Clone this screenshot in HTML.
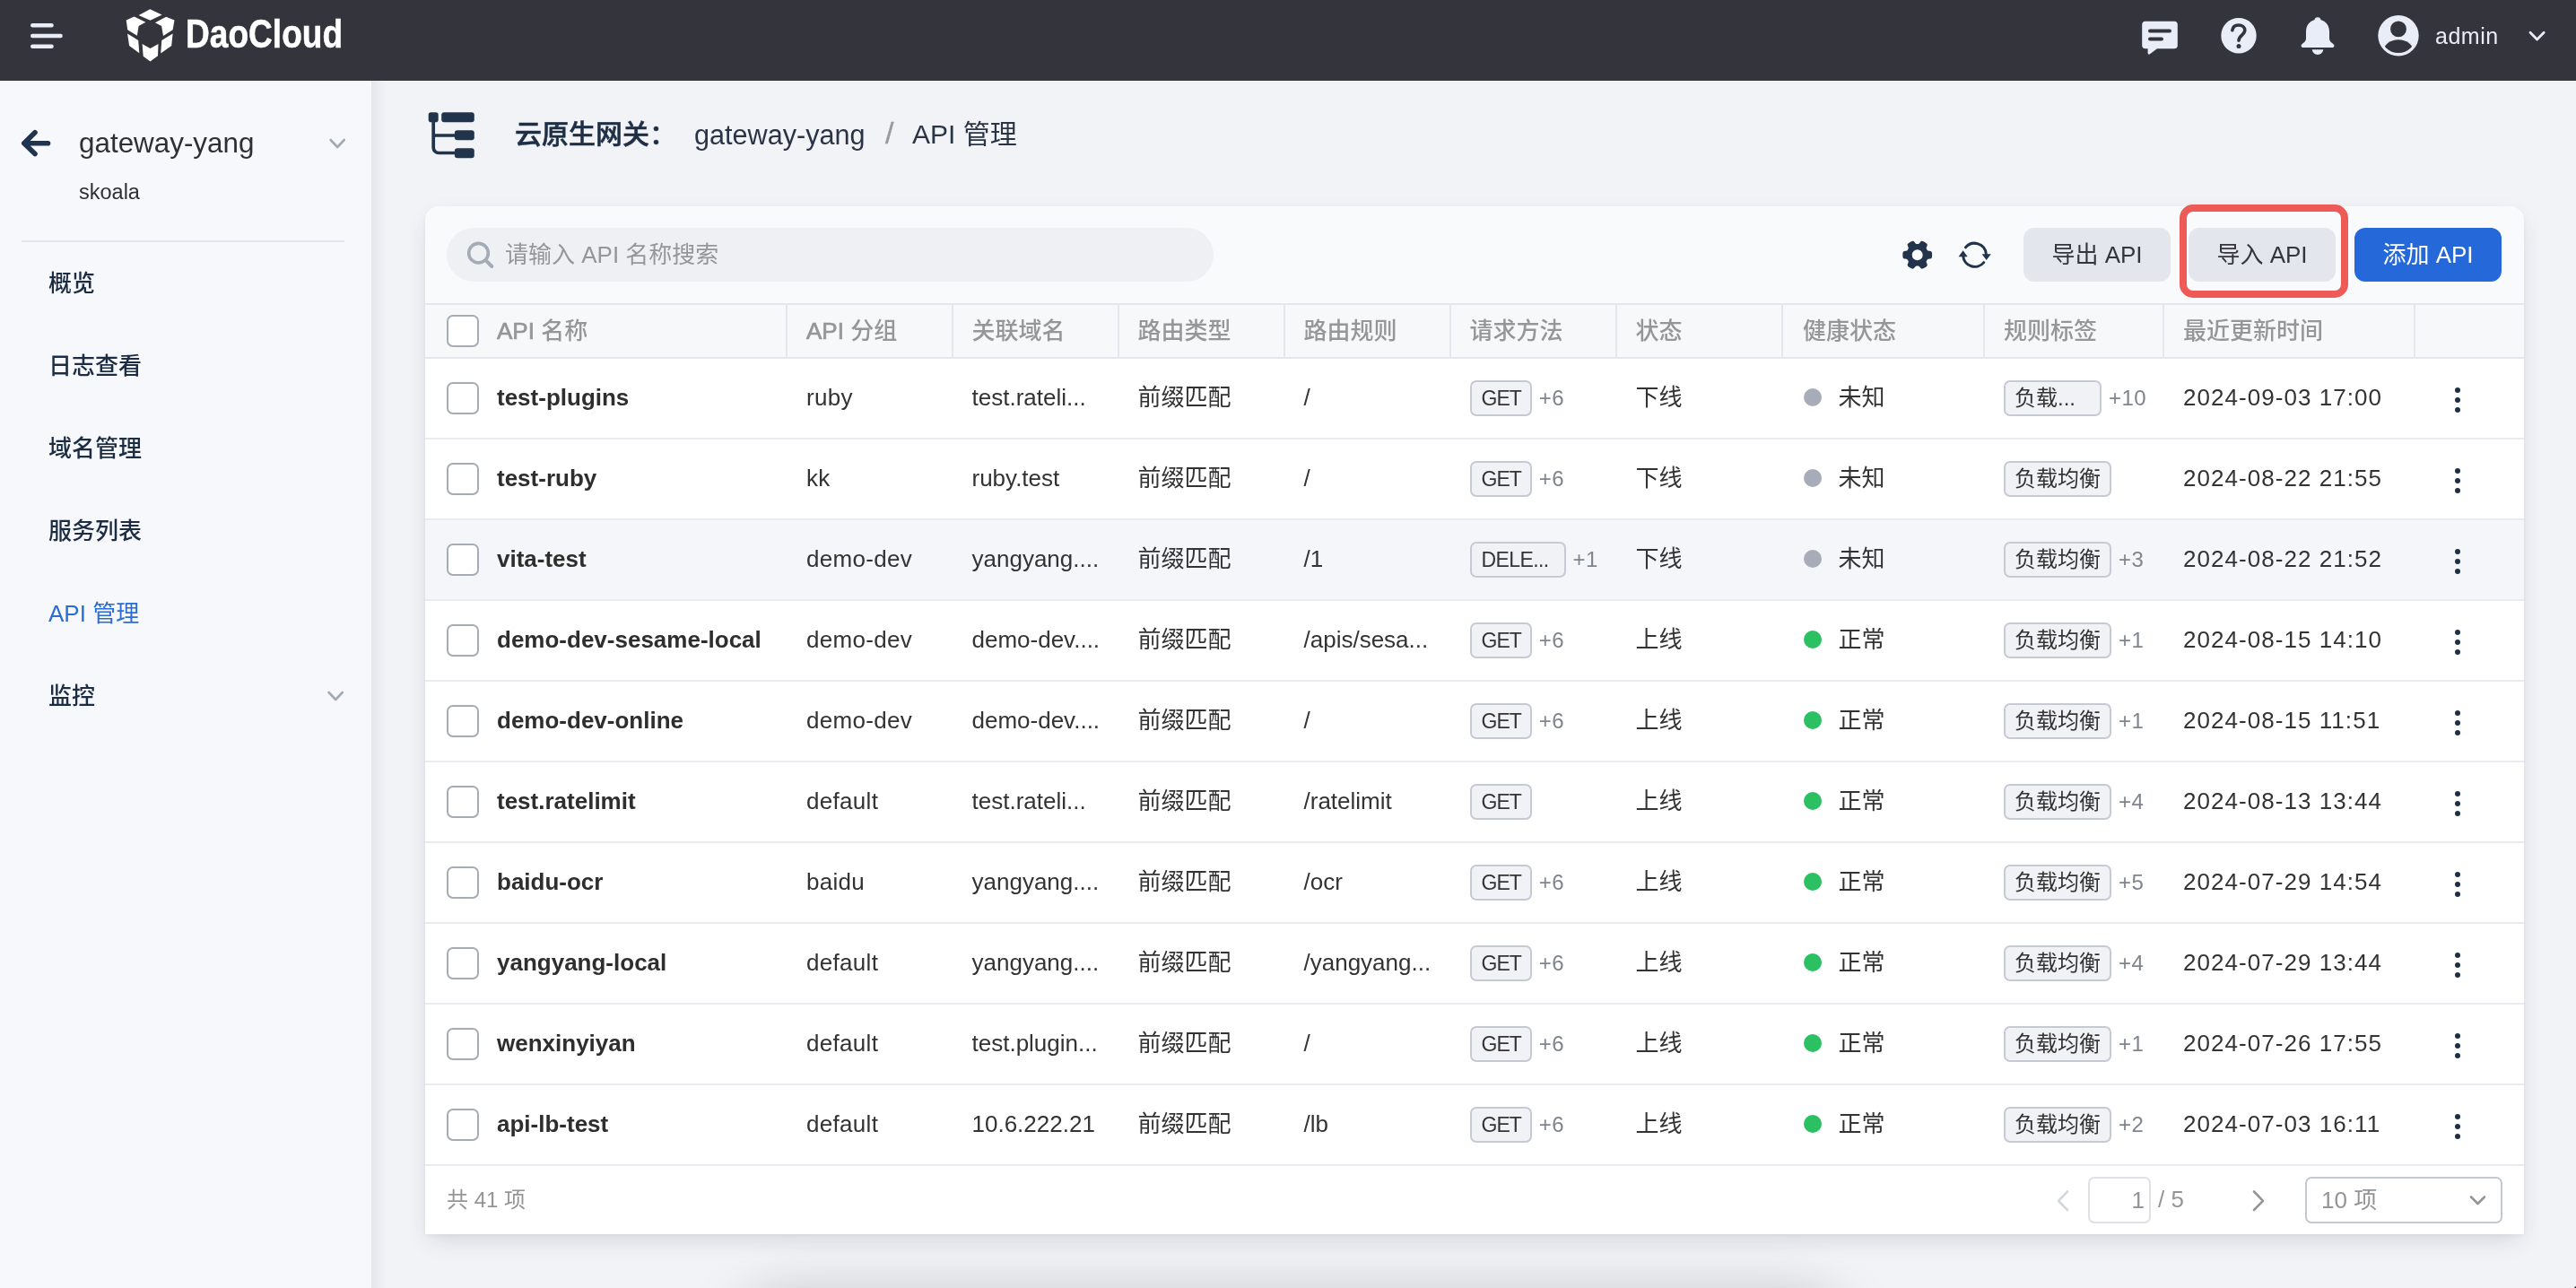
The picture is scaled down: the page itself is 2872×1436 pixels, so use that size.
<!DOCTYPE html>
<html lang="zh-CN">
<head>
<meta charset="utf-8">
<title>API 管理</title>
<style>
*{box-sizing:border-box;margin:0;padding:0}
html,body{width:2872px;height:1436px;overflow:hidden;background:#f2f3f7}
body{position:relative;font-family:"Liberation Sans","Noto Sans CJK SC",sans-serif;color:#2b2e33;font-size:26px}
i{font-style:normal}
.abs{position:absolute}
#app{position:absolute;left:0;top:0;width:2872px;height:1436px;will-change:transform;overflow:hidden}
/* header */
#hd{position:absolute;left:0;top:0;width:2872px;height:90px;background:#34353c}
#hd svg{position:absolute}
#brand{position:absolute;left:207px;top:7.5px;-webkit-text-stroke:.5px #fff;height:60px;line-height:60px;font-weight:bold;font-size:44px;color:#fff;transform-origin:0 50%;transform:scaleX(.843);letter-spacing:0;white-space:nowrap}
#admin{position:absolute;left:2715px;top:20px;height:40px;line-height:40px;font-size:25px;letter-spacing:.5px;color:#e9edf7;white-space:nowrap}
/* sidebar */
#sb{position:absolute;left:0;top:90px;width:414px;height:1346px;background:#f7f8fc}
#sbshadow{position:absolute;left:414px;top:90px;width:18px;height:1346px;background:linear-gradient(90deg,rgba(30,40,70,.06),rgba(30,40,70,0))}
#gw{position:absolute;left:88px;top:138px;height:44px;line-height:44px;font-size:31.4px;color:#2f3033;white-space:nowrap}
#sk{position:absolute;left:88px;top:196px;height:36px;line-height:36px;font-size:23.5px;color:#2f3033;white-space:nowrap}
#sbline{position:absolute;left:24px;top:268px;width:360px;height:2px;background:#e3e6ee}
.mi{position:absolute;left:54px;height:40px;line-height:40px;font-size:26px;font-weight:500;color:#1c2d43;white-space:nowrap}
.mi.act{color:#2b6dd2;font-weight:400}
/* main */
#ttl{position:absolute;left:574px;top:128px;height:44px;line-height:44px;font-size:30px;font-weight:500;-webkit-text-stroke:.55px #1e2f45;color:#1e2f45;white-space:nowrap}
#bc1{position:absolute;left:774px;top:128px;height:44px;line-height:44px;font-size:30.6px;color:#2a3445;white-space:nowrap}
#bcs{position:absolute;left:987px;top:126px;height:44px;line-height:44px;font-size:34px;-webkit-text-stroke:.4px #9a9a9a;color:#9a9a9a;white-space:nowrap}
#bc2{position:absolute;left:1017px;top:128px;height:44px;line-height:44px;font-size:30px;color:#2a3445;white-space:nowrap}
#card{position:absolute;left:474px;top:230px;width:2340px;height:1146px;background:#fff;border-radius:16px 16px 0 0;box-shadow:0 10px 26px -4px rgba(40,50,80,.14),0 2px 6px rgba(40,50,80,.05)}
#tb{position:absolute;left:0;top:0;width:2340px;height:108px;background:#f9fafc;border-radius:16px 16px 0 0}
#search{position:absolute;left:24px;top:24px;width:855px;height:60px;border-radius:30px;background:#eff0f4}
#search span{position:absolute;left:65px;top:0;height:60px;line-height:60px;font-size:26px;color:#959699;white-space:nowrap}
.btn{position:absolute;top:24px;width:164px;height:60px;line-height:60px;border-radius:12px;background:#e4e6ee;color:#33363b;text-align:center;font-size:26px;white-space:nowrap}
.btn.pri{background:#2468da;color:#fff}
#redbox{position:absolute;left:1956px;top:-2px;width:188px;height:104px;border:8px solid #ee5b57;border-radius:15px}
/* table */
#th{position:absolute;left:0;top:108px;width:2340px;height:62px;background:#f7f8fa;border-top:2px solid #e4e7ee;border-bottom:2px solid #e4e7ee;display:flex}
#th .td{height:58px;line-height:58px;color:#959698;font-weight:500;border-right:2px solid #e4e7ee}
#th .td.c10{border-right:0}
#th b{font-weight:normal;-webkit-text-stroke:.7px #959698}
#tbody{position:absolute;left:0;top:170px;width:2340px}
.tr{display:flex;height:90px;border-bottom:2px solid #e9ebf1;background:#fff}
.tr.hov{background:#f5f6f9}
.td{position:relative;height:88px;line-height:86px;padding-left:21px;white-space:nowrap;overflow:hidden;flex:none;font-size:26px;color:#333;letter-spacing:.3px}
.cj,.nm,#th .td{letter-spacing:0}
.c0{width:404px;padding-left:80px}
.c1{width:184.5px}.c2{width:185px;letter-spacing:0}.c3{width:185px}.c4{width:185px;letter-spacing:0}.c5{width:185px}.c6{width:185.5px}.c7{width:225px;padding-left:22px}.c8{width:200px}.c9{width:280px;letter-spacing:1.05px}.c10{width:120px}
.cb{position:absolute;left:24px;top:50%;margin-top:-18px;width:36px;height:36px;border:2px solid #a6acb6;border-radius:7px;background:#fff}
.nm{font-weight:bold;color:#2e2e2e}
.tag{display:inline-block;vertical-align:middle;height:40px;line-height:36px;padding:0 10px 0 11px;border:2px solid #c6cad4;border-radius:7px;background:#f1f2f6;font-size:23px;letter-spacing:-1px;color:#333;position:relative;top:-1px}
.tag.tcj{font-size:24px;letter-spacing:0;padding:0 10px}
.tag.tnar{width:109px}
.tag.tdel{letter-spacing:-.6px;width:107px}
.more{color:#7f858e;margin-left:8px;font-size:24px;letter-spacing:.4px}
.dot{display:inline-block;width:20px;height:20px;border-radius:50%;vertical-align:middle;margin-right:18.5px;position:relative;top:-2px;margin-left:1px}
.dot.un{background:#a6adb9}
.dot.ok{background:#2bc163}
.kb{position:absolute;left:44px;top:32px;width:6px;height:6px;border-radius:50%;background:#1e2f45;box-shadow:0 11px 0 #1e2f45,0 22px 0 #1e2f45}
/* footer */
#ft{position:absolute;left:0;top:1070px;width:2340px;height:76px}
#total{position:absolute;left:24px;top:0;height:76px;line-height:76px;font-size:24px;color:#949597}
#pgin{position:absolute;left:1854px;top:12px;width:70px;height:52px;border:2px solid #dfe1e7;border-radius:7px;text-align:right;padding-right:5px;line-height:48px;font-size:26px;color:#949597}
#pgof{position:absolute;left:1932px;top:12px;height:51px;line-height:51px;font-size:26px;color:#949597}
#pgsel{position:absolute;left:2096px;top:12px;width:220px;height:52px;border:2px solid #c5c9d4;border-radius:7px;padding-left:16px;line-height:48px;font-size:26px;color:#949597}
#botshadow{position:absolute;left:850px;top:1472px;width:1180px;height:60px;border-radius:30px;background:#000;box-shadow:0 0 60px 34px rgba(0,0,0,.17)}
</style>
</head>
<body>
<div id="app">
<div id="hd">
  <svg style="left:30px;top:24px" width="44" height="32" viewBox="0 0 44 32"><g stroke="#e9edf7" stroke-width="4.4" stroke-linecap="round"><path d="M6.2 4.2H27.6M6.2 16H37.6M6.2 27.8H27.6"/></g></svg>
  <svg style="left:138px;top:8px" width="60" height="64" viewBox="0 0 60 64" fill="#fff"><path d="M29.3 2.3L42.6 8.5L29.5 14.8L16.6 8.9Z"/><path d="M2.7 14.4L11.6 10.5L24.4 16.8L16.6 21.1L14.9 31.7L4.2 25.2Z"/><path d="M47.2 10.7L56.5 14.5L54.6 25.2L44 32L42.1 21.1L34.9 17.2Z"/><path d="M4.1 29.5L16.2 37.1L17.3 51.2L6.1 43.1Z"/><path d="M54.6 29.5L53.2 43.1L41.2 51.6L42.3 37.1Z"/><path d="M20.6 40.9L29.5 46L38.5 40.9L38 54.2L29.5 60.5L21.7 54.7Z"/></svg>
  <div id="brand">DaoCloud</div>
  <!-- chat -->
  <svg style="left:2384px;top:20px" width="48" height="44" viewBox="0 0 48 44"><path fill="#e9edf7" d="M8 3.7H40A3.8 3.8 0 0 1 43.8 7.5V30.5A3.8 3.8 0 0 1 40 34.3H21L12.6 40.4A1.3 1.3 0 0 1 10.6 39.3V34.3H8A3.8 3.8 0 0 1 4.2 30.5V7.500A3.8 3.8 0 0 1 8 3.7Z"/><path stroke="#34353c" stroke-width="4" stroke-linecap="round" d="M13 14.600H35M13 23.400H26"/></svg>
  <!-- help -->
  <svg style="left:2474px;top:18px" width="44" height="44" viewBox="0 0 44 44"><circle cx="22" cy="21.700" r="19.700" fill="#e9edf7"/><path fill="none" stroke="#34353c" stroke-width="3.600" stroke-linecap="round" stroke-linejoin="round" d="M14.800 15.800C15.400 11.800 18.300 10 21.800 10C25.800 10 28.800 12.400 28.800 15.800C28.800 20.800 22 21.500 22 27.200"/><circle cx="22" cy="33.400" r="2.500" fill="#34353c"/></svg>
  <!-- bell -->
  <svg style="left:2562px;top:16px" width="44" height="48" viewBox="0 0 44 48"><path fill="#e9edf7" d="M22 3.200C24 3.200 25.300 4.500 25.600 6.200C31.600 7.800 35 12.800 35 19.500V26.500C35 29 36 30.500 38.400 32.300C40.400 33.800 40.700 35 40.300 35.800C39.900 36.700 39 37 37.800 37H6.200C5 37 4.100 36.700 3.700 35.800C3.300 35 3.600 33.800 5.600 32.300C8 30.500 9 29 9 26.500V19.500C9 12.800 12.400 7.800 18.400 6.200C18.700 4.500 20 3.200 22 3.200Z"/><path fill="#e9edf7" d="M15.800 39.300H28.200C27.800 42.600 25.300 44.900 22 44.900C18.700 44.900 16.200 42.600 15.800 39.300Z"/></svg>
  <!-- avatar -->
  <svg style="left:2650px;top:16px" width="48" height="48" viewBox="0 0 48 48"><defs><clipPath id="avc"><circle cx="24" cy="23.800" r="19.300"/></clipPath></defs><circle cx="24" cy="23.800" r="22.700" fill="#e9edf7"/><circle cx="24" cy="16.400" r="8.900" fill="#34353c"/><ellipse cx="24" cy="40.500" rx="16.300" ry="12.300" fill="#34353c" clip-path="url(#avc)"/></svg>
  <div id="admin">admin</div>
  <svg style="left:2816px;top:32px" width="26" height="18" viewBox="0 0 26 18"><path fill="none" stroke="#e9edf7" stroke-width="2.800" stroke-linecap="round" stroke-linejoin="round" d="M5 4.300L12.600 12L20.200 4.300"/></svg>
</div>

<div id="sb"></div>
<div id="sbshadow"></div>
<svg class="abs" style="left:20px;top:140px" width="40" height="40" viewBox="0 0 40 40"><path fill="none" stroke="#1f344e" stroke-width="5.600" stroke-linecap="round" stroke-linejoin="round" d="M33.500 19.800H7.500M19 7.800L6.800 19.800L19 31.600"/></svg>
<div id="gw">gateway-yang</div>
<svg class="abs" style="left:364px;top:150px" width="24" height="20" viewBox="0 0 24 20"><path fill="none" stroke="#a3aab4" stroke-width="2.600" stroke-linecap="round" stroke-linejoin="round" d="M4.600 6L12.200 14L19.800 6"/></svg>
<div id="sk">skoala</div>
<div id="sbline"></div>
<div class="mi" style="top:296px">概览</div>
<div class="mi" style="top:388px">日志查看</div>
<div class="mi" style="top:480px">域名管理</div>
<div class="mi" style="top:572px">服务列表</div>
<div class="mi act" style="top:664px">API 管理</div>
<div class="mi" style="top:756px">监控</div>
<svg class="abs" style="left:362px;top:766px" width="24" height="20" viewBox="0 0 24 20"><path fill="none" stroke="#a3aab4" stroke-width="2.600" stroke-linecap="round" stroke-linejoin="round" d="M4.600 6L12.200 14L19.800 6"/></svg>

<!-- title -->
<svg class="abs" style="left:474px;top:120px" width="60" height="60" viewBox="0 0 60 60"><g fill="#21344b"><rect x="3.700" y="5.200" width="11" height="11" rx="2.800"/><rect x="18.200" y="5.200" width="36.600" height="11" rx="3"/><rect x="32.900" y="25.200" width="21.900" height="11" rx="3"/><rect x="32.900" y="45.300" width="21.900" height="11" rx="3"/></g><path fill="none" stroke="#21344b" stroke-width="3.700" d="M9.200 14V44.500A6 6 0 0 0 15.200 50.500H34M9.200 31H34"/></svg>
<div id="ttl">云原生网关：</div>
<div id="bc1">gateway-yang</div>
<div id="bcs">/</div>
<div id="bc2">API 管理</div>

<div id="card">
  <div id="tb">
    <div id="search">
      <svg style="position:absolute;left:20px;top:13px" width="36" height="36" viewBox="0 0 36 36"><circle cx="15.500" cy="15.200" r="10.800" fill="none" stroke="#a3abb7" stroke-width="3.600"/><path stroke="#a3abb7" stroke-width="4" stroke-linecap="round" d="M23.500 23.200L30.300 30"/></svg>
      <span>请输入 API 名称搜索</span>
    </div>
    <svg class="abs" style="left:1644px;top:36px" width="40" height="40" viewBox="0 0 40 40"><path fill="#21344b" fill-rule="evenodd" d="M36.10 18.20L36.09 18.63L36.08 19.06L36.05 19.49L36.00 19.91L35.94 20.34L35.86 20.76L35.75 21.17L35.58 21.57L35.29 21.94L34.82 22.25L34.10 22.47L33.20 22.59L32.36 22.68L31.72 22.82L31.30 23.00L31.01 23.23L30.78 23.49L30.60 23.75L30.43 24.02L30.27 24.30L30.11 24.58L29.96 24.86L29.82 25.16L29.71 25.47L29.66 25.84L29.71 26.31L29.91 26.92L30.25 27.70L30.59 28.54L30.77 29.27L30.74 29.83L30.56 30.26L30.30 30.61L30.00 30.92L29.67 31.20L29.33 31.46L28.99 31.71L28.63 31.95L28.27 32.18L27.90 32.40L27.53 32.61L27.14 32.81L26.76 33.00L26.37 33.17L25.97 33.34L25.56 33.48L25.15 33.58L24.72 33.64L24.25 33.58L23.75 33.32L23.21 32.80L22.65 32.09L22.15 31.40L21.71 30.92L21.34 30.65L20.99 30.51L20.66 30.44L20.34 30.41L20.02 30.40L19.70 30.40L19.38 30.40L19.06 30.41L18.74 30.44L18.41 30.51L18.06 30.65L17.69 30.92L17.25 31.40L16.75 32.09L16.19 32.80L15.65 33.32L15.15 33.58L14.68 33.64L14.25 33.58L13.84 33.48L13.43 33.34L13.03 33.17L12.64 33.00L12.26 32.81L11.87 32.61L11.50 32.40L11.13 32.18L10.77 31.95L10.41 31.71L10.07 31.46L9.73 31.20L9.40 30.92L9.10 30.61L8.84 30.26L8.66 29.83L8.63 29.27L8.81 28.54L9.15 27.70L9.49 26.92L9.69 26.31L9.74 25.84L9.69 25.47L9.58 25.16L9.44 24.86L9.29 24.58L9.13 24.30L8.97 24.02L8.80 23.75L8.62 23.49L8.39 23.23L8.10 23.00L7.68 22.82L7.04 22.68L6.20 22.59L5.30 22.47L4.58 22.25L4.11 21.94L3.82 21.57L3.65 21.17L3.54 20.76L3.46 20.34L3.40 19.91L3.35 19.49L3.32 19.06L3.31 18.63L3.30 18.20L3.31 17.77L3.32 17.34L3.35 16.91L3.40 16.49L3.46 16.06L3.54 15.64L3.65 15.23L3.82 14.83L4.11 14.46L4.58 14.15L5.30 13.93L6.20 13.81L7.04 13.72L7.68 13.58L8.10 13.40L8.39 13.17L8.62 12.91L8.80 12.65L8.97 12.38L9.13 12.10L9.29 11.82L9.44 11.54L9.58 11.24L9.69 10.93L9.74 10.56L9.69 10.09L9.49 9.48L9.15 8.70L8.81 7.86L8.63 7.13L8.66 6.57L8.84 6.14L9.10 5.79L9.40 5.48L9.73 5.20L10.07 4.94L10.41 4.69L10.77 4.45L11.13 4.22L11.50 4.00L11.87 3.79L12.26 3.59L12.64 3.40L13.03 3.23L13.43 3.06L13.84 2.92L14.25 2.82L14.68 2.76L15.15 2.82L15.65 3.08L16.19 3.60L16.75 4.31L17.25 5.00L17.69 5.48L18.06 5.75L18.41 5.89L18.74 5.96L19.06 5.99L19.38 6.00L19.70 6.00L20.02 6.00L20.34 5.99L20.66 5.96L20.99 5.89L21.34 5.75L21.71 5.48L22.15 5.00L22.65 4.31L23.21 3.60L23.75 3.08L24.25 2.82L24.72 2.76L25.15 2.82L25.56 2.92L25.97 3.06L26.37 3.23L26.76 3.40L27.14 3.59L27.53 3.79L27.90 4.00L28.27 4.22L28.63 4.45L28.99 4.69L29.33 4.94L29.67 5.20L30.00 5.48L30.30 5.79L30.56 6.14L30.74 6.57L30.77 7.13L30.59 7.86L30.25 8.70L29.91 9.48L29.71 10.09L29.66 10.56L29.71 10.93L29.82 11.24L29.96 11.54L30.11 11.82L30.27 12.10L30.43 12.38L30.60 12.65L30.78 12.91L31.01 13.17L31.30 13.40L31.72 13.58L32.36 13.72L33.20 13.81L34.10 13.93L34.82 14.15L35.29 14.46L35.58 14.83L35.75 15.23L35.86 15.64L35.94 16.06L36.00 16.49L36.05 16.91L36.08 17.34L36.09 17.77ZM13.70 18.20a6.00 6.00 0 1 0 12.00 0a6.00 6.00 0 1 0 -12.00 0Z"/></svg>
    <svg class="abs" style="left:1706px;top:34px" width="44" height="40" viewBox="0 0 44 40"><g fill="none" stroke="#21344b" stroke-width="3" stroke-linecap="round"><path d="M11.500 11.800A13 13 0 0 1 34.300 19"/><path d="M31.700 28.600A13 13 0 0 1 8.700 21.500"/></g><path fill="#21344b" d="M29.600 19.200H39.800L34.700 26Z"/><path fill="#21344b" d="M3.600 22.300H13.700L8.600 15.200Z"/></svg>
    <div class="btn" style="left:1782px">导出 API</div>
    <div class="btn" style="left:1966px">导入 API</div>
    <div class="btn pri" style="left:2151px">添加 API</div>
    <div id="redbox"></div>
  </div>
  <div id="th">
    <div class="td c0"><span class="cb"></span><b>API</b> 名称</div>
    <div class="td c1"><b>API</b> 分组</div>
    <div class="td c2">关联域名</div>
    <div class="td c3">路由类型</div>
    <div class="td c4">路由规则</div>
    <div class="td c5">请求方法</div>
    <div class="td c6">状态</div>
    <div class="td c7">健康状态</div>
    <div class="td c8">规则标签</div>
    <div class="td c9">最近更新时间</div>
    <div class="td c10"></div>
  </div>
  <div id="tbody">
<div class="tr">
<div class="td c0"><span class="cb"></span><b class="nm">test-plugins</b></div>
<div class="td c1">ruby</div>
<div class="td c2">test.rateli...</div>
<div class="td c3 cj">前缀匹配</div>
<div class="td c4">/</div>
<div class="td c5"><span class="tag">GET</span><span class="more">+6</span></div>
<div class="td c6 cj">下线</div>
<div class="td c7 cj"><i class="dot un"></i>未知</div>
<div class="td c8"><span class="tag tcj tnar">负载...</span><span class="more">+10</span></div>
<div class="td c9">2024-09-03 17:00</div>
<div class="td c10"><i class="kb"></i></div>
</div>
<div class="tr">
<div class="td c0"><span class="cb"></span><b class="nm">test-ruby</b></div>
<div class="td c1">kk</div>
<div class="td c2">ruby.test</div>
<div class="td c3 cj">前缀匹配</div>
<div class="td c4">/</div>
<div class="td c5"><span class="tag">GET</span><span class="more">+6</span></div>
<div class="td c6 cj">下线</div>
<div class="td c7 cj"><i class="dot un"></i>未知</div>
<div class="td c8"><span class="tag tcj">负载均衡</span></div>
<div class="td c9">2024-08-22 21:55</div>
<div class="td c10"><i class="kb"></i></div>
</div>
<div class="tr hov">
<div class="td c0"><span class="cb"></span><b class="nm">vita-test</b></div>
<div class="td c1">demo-dev</div>
<div class="td c2">yangyang....</div>
<div class="td c3 cj">前缀匹配</div>
<div class="td c4">/1</div>
<div class="td c5"><span class="tag tdel">DELE...</span><span class="more">+1</span></div>
<div class="td c6 cj">下线</div>
<div class="td c7 cj"><i class="dot un"></i>未知</div>
<div class="td c8"><span class="tag tcj">负载均衡</span><span class="more">+3</span></div>
<div class="td c9">2024-08-22 21:52</div>
<div class="td c10"><i class="kb"></i></div>
</div>
<div class="tr">
<div class="td c0"><span class="cb"></span><b class="nm">demo-dev-sesame-local</b></div>
<div class="td c1">demo-dev</div>
<div class="td c2">demo-dev....</div>
<div class="td c3 cj">前缀匹配</div>
<div class="td c4">/apis/sesa...</div>
<div class="td c5"><span class="tag">GET</span><span class="more">+6</span></div>
<div class="td c6 cj">上线</div>
<div class="td c7 cj"><i class="dot ok"></i>正常</div>
<div class="td c8"><span class="tag tcj">负载均衡</span><span class="more">+1</span></div>
<div class="td c9">2024-08-15 14:10</div>
<div class="td c10"><i class="kb"></i></div>
</div>
<div class="tr">
<div class="td c0"><span class="cb"></span><b class="nm">demo-dev-online</b></div>
<div class="td c1">demo-dev</div>
<div class="td c2">demo-dev....</div>
<div class="td c3 cj">前缀匹配</div>
<div class="td c4">/</div>
<div class="td c5"><span class="tag">GET</span><span class="more">+6</span></div>
<div class="td c6 cj">上线</div>
<div class="td c7 cj"><i class="dot ok"></i>正常</div>
<div class="td c8"><span class="tag tcj">负载均衡</span><span class="more">+1</span></div>
<div class="td c9">2024-08-15 11:51</div>
<div class="td c10"><i class="kb"></i></div>
</div>
<div class="tr">
<div class="td c0"><span class="cb"></span><b class="nm">test.ratelimit</b></div>
<div class="td c1">default</div>
<div class="td c2">test.rateli...</div>
<div class="td c3 cj">前缀匹配</div>
<div class="td c4">/ratelimit</div>
<div class="td c5"><span class="tag">GET</span></div>
<div class="td c6 cj">上线</div>
<div class="td c7 cj"><i class="dot ok"></i>正常</div>
<div class="td c8"><span class="tag tcj">负载均衡</span><span class="more">+4</span></div>
<div class="td c9">2024-08-13 13:44</div>
<div class="td c10"><i class="kb"></i></div>
</div>
<div class="tr">
<div class="td c0"><span class="cb"></span><b class="nm">baidu-ocr</b></div>
<div class="td c1">baidu</div>
<div class="td c2">yangyang....</div>
<div class="td c3 cj">前缀匹配</div>
<div class="td c4">/ocr</div>
<div class="td c5"><span class="tag">GET</span><span class="more">+6</span></div>
<div class="td c6 cj">上线</div>
<div class="td c7 cj"><i class="dot ok"></i>正常</div>
<div class="td c8"><span class="tag tcj">负载均衡</span><span class="more">+5</span></div>
<div class="td c9">2024-07-29 14:54</div>
<div class="td c10"><i class="kb"></i></div>
</div>
<div class="tr">
<div class="td c0"><span class="cb"></span><b class="nm">yangyang-local</b></div>
<div class="td c1">default</div>
<div class="td c2">yangyang....</div>
<div class="td c3 cj">前缀匹配</div>
<div class="td c4">/yangyang...</div>
<div class="td c5"><span class="tag">GET</span><span class="more">+6</span></div>
<div class="td c6 cj">上线</div>
<div class="td c7 cj"><i class="dot ok"></i>正常</div>
<div class="td c8"><span class="tag tcj">负载均衡</span><span class="more">+4</span></div>
<div class="td c9">2024-07-29 13:44</div>
<div class="td c10"><i class="kb"></i></div>
</div>
<div class="tr">
<div class="td c0"><span class="cb"></span><b class="nm">wenxinyiyan</b></div>
<div class="td c1">default</div>
<div class="td c2">test.plugin...</div>
<div class="td c3 cj">前缀匹配</div>
<div class="td c4">/</div>
<div class="td c5"><span class="tag">GET</span><span class="more">+6</span></div>
<div class="td c6 cj">上线</div>
<div class="td c7 cj"><i class="dot ok"></i>正常</div>
<div class="td c8"><span class="tag tcj">负载均衡</span><span class="more">+1</span></div>
<div class="td c9">2024-07-26 17:55</div>
<div class="td c10"><i class="kb"></i></div>
</div>
<div class="tr">
<div class="td c0"><span class="cb"></span><b class="nm">api-lb-test</b></div>
<div class="td c1">default</div>
<div class="td c2">10.6.222.21</div>
<div class="td c3 cj">前缀匹配</div>
<div class="td c4">/lb</div>
<div class="td c5"><span class="tag">GET</span><span class="more">+6</span></div>
<div class="td c6 cj">上线</div>
<div class="td c7 cj"><i class="dot ok"></i>正常</div>
<div class="td c8"><span class="tag tcj">负载均衡</span><span class="more">+2</span></div>
<div class="td c9">2024-07-03 16:11</div>
<div class="td c10"><i class="kb"></i></div>
</div>
  </div>
  <div id="ft">
    <div id="total">共 41 项</div>
    <svg class="abs" style="left:1816px;top:24px" width="20" height="30" viewBox="0 0 20 30"><path fill="none" stroke="#d3d6dc" stroke-width="2.600" stroke-linecap="round" stroke-linejoin="round" d="M15 4.500L5 14.800L15 25"/></svg>
    <div id="pgin">1</div>
    <div id="pgof">/ 5</div>
    <svg class="abs" style="left:2034px;top:24px" width="20" height="30" viewBox="0 0 20 30"><path fill="none" stroke="#949597" stroke-width="2.600" stroke-linecap="round" stroke-linejoin="round" d="M5 4.500L15 14.800L5 25"/></svg>
    <div id="pgsel">10 项<svg style="position:absolute;left:179px;top:17px" width="24" height="16" viewBox="0 0 24 16"><path fill="none" stroke="#949597" stroke-width="2.600" stroke-linecap="round" stroke-linejoin="round" d="M4 3.500L11.500 11L19 3.500"/></svg></div>
  </div>
</div>
<div id="botshadow"></div>
<div style="position:absolute;right:-1px;bottom:-1px;width:3px;height:3px;border-radius:3px 0 0 0;background:#2a2a2a"></div>
</div>
</body>
</html>
